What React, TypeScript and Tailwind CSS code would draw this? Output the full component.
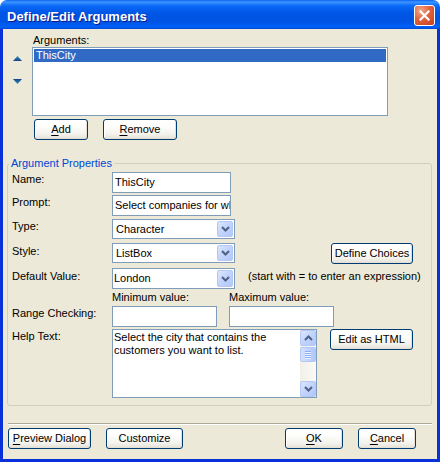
import React from "react";

type Kids = { children?: React.ReactNode; className?: string };

function Mnemonic({ children }: { children: React.ReactNode }) {
  return <span className="underline decoration-1 underline-offset-[2px]">{children}</span>;
}

function XpButton({ children, className = "" }: Kids) {
  return (
    <button
      type="button"
      className={`flex h-[21px] shrink-0 items-center justify-center rounded-[3px] border border-[#003C74] bg-[linear-gradient(180deg,#FFFFFF_0%,#FDFDFB_35%,#F3F2EC_75%,#E3E0D6_100%)] text-[11px] leading-[13px] text-black shadow-[inset_-1px_-1px_0_#E3DFD4,inset_1px_1px_0_#FFFFFF] ${className}`}
    >
      {children}
    </button>
  );
}

function MoveArrow({ up }: { up: boolean }) {
  const id = up ? "argMoveUp" : "argMoveDown";
  return (
    <svg width="9" height="5" viewBox="0 0 9 5" className="block">
      <defs>
        <linearGradient id={id} x1="0" y1="0" x2="0" y2="1">
          <stop offset="0" stopColor={up ? "#2A9CB2" : "#1B3C8E"} />
          <stop offset="1" stopColor={up ? "#1B3C8E" : "#2A9CB2"} />
        </linearGradient>
      </defs>
      <polygon points={up ? "4.5,0 9,5 0,5" : "0,0 9,0 4.5,5"} fill={`url(#${id})`} />
    </svg>
  );
}

function Chevron({ up = false }: { up?: boolean }) {
  return (
    <svg width="9" height="6" viewBox="0 0 9 6" className="block">
      <path
        d={up ? "M1 5 L4.5 1.5 L8 5" : "M1 1 L4.5 4.5 L8 1"}
        fill="none"
        stroke="#4D6185"
        strokeWidth="2"
      />
    </svg>
  );
}

function BlueKey({ up = false, className = "" }: { up?: boolean; className?: string }) {
  return (
    <div
      className={`flex w-[16px] shrink-0 items-center justify-center rounded-[2px] border border-[#B4C8F6] bg-[linear-gradient(135deg,#DCE7FE_0%,#C4D5FC_45%,#B2C7F8_100%)] ${className}`}
    >
      <Chevron up={up} />
    </div>
  );
}

function TextBox({ children, className = "" }: Kids) {
  return (
    <div
      className={`flex h-[21px] shrink-0 items-center overflow-hidden whitespace-nowrap border border-[#7F9DB9] bg-white pl-[2px] ${className}`}
    >
      {children}
    </div>
  );
}

function Combo({ value, pad = "pl-[2px]", height = "h-[20px]" }: { value: string; pad?: string; height?: string }) {
  return (
    <div className={`flex ${height} w-[123px] shrink-0 border border-[#7F9DB9] bg-white p-[1px]`}>
      <div className={`flex flex-1 items-center whitespace-nowrap ${pad}`}>{value}</div>
      <BlueKey />
    </div>
  );
}

function FieldLabel({ children }: Kids) {
  return <div className="w-[100px] shrink-0 pt-[1px]">{children}</div>;
}

function Scrollbar() {
  return (
    <div className="flex w-[16px] shrink-0 flex-col bg-[linear-gradient(90deg,#F1EFE8_0%,#FBFAF6_100%)]">
      <BlueKey up className="h-[16px]" />
      <div className="mt-[1px] flex h-[15px] w-[16px] flex-col items-center justify-center gap-[1px] rounded-[2px] border border-[#B4C8F6] bg-[linear-gradient(90deg,#D3E0FD_0%,#C0D2FB_60%,#B1C6F8_100%)]">
        {[0, 1, 2, 3].map((i) => (
          <div key={i} className="h-[1px] w-[6px] bg-[#8CB0F8] shadow-[0_1px_0_#EEF4FE]" />
        ))}
      </div>
      <div className="flex-1" />
      <BlueKey className="h-[16px]" />
    </div>
  );
}

export default function App() {
  return (
    <div className="flex h-[462px] w-[440px] flex-col text-[11px] leading-[13px] text-black [font-family:'Liberation_Sans',Arial,sans-serif]">
      {/* caption bar */}
      <div className="flex h-[29px] shrink-0 items-start rounded-t-[7px] bg-[linear-gradient(180deg,#0A61F0_0%,#3D95FF_7%,#0A6AF8_20%,#0055E5_45%,#0054E3_75%,#0060F8_92%,#0049D6_100%)]">
        <div className="ml-[7px] mt-[9px] text-[13px] font-bold leading-[16px] text-white [text-shadow:1px_1px_0_#0A1A8C]">
          Define/Edit Arguments
        </div>
        <div className="ml-auto mr-[5px] mt-[5px] flex h-[21px] w-[21px] items-center justify-center rounded-[3px] border border-white bg-[radial-gradient(circle_at_30%_25%,#F2A88C_0%,#E2643F_45%,#C43C1C_100%)]">
          <svg width="11" height="11" viewBox="0 0 11 11" className="block">
            <path d="M1.5 1.5 L9.5 9.5 M9.5 1.5 L1.5 9.5" stroke="white" strokeWidth="2.2" strokeLinecap="square" />
          </svg>
        </div>
      </div>

      {/* dialog body */}
      <div className="flex flex-1 flex-col border-x-[3px] border-b-[3px] border-[#0831D9] bg-[#ECE9D8] pt-[5px]">
        {/* argument list */}
        <div className="flex">
          <div className="flex w-[29px] shrink-0 flex-col pl-[10px] pt-[22px]">
            <MoveArrow up />
            <div className="mt-[18px]">
              <MoveArrow up={false} />
            </div>
          </div>
          <div className="flex flex-col">
            <div className="h-[13px] pl-[1px]">Arguments:</div>
            <div className="h-[69px] w-[356px] border border-[#7F9DB9] bg-white p-[1px]">
              <div className="h-[13px] bg-[#316AC5] pl-[2px] text-white">ThisCity</div>
            </div>
            <div className="mt-[3px] flex gap-[15px] pl-[2px]">
              <XpButton className="w-[54px]">
                <Mnemonic>A</Mnemonic>dd
              </XpButton>
              <XpButton className="w-[74px]">
                <Mnemonic>R</Mnemonic>emove
              </XpButton>
            </div>
          </div>
        </div>

        {/* properties group */}
        <fieldset className="ml-[4px] mt-[17px] w-[425px] min-w-0 rounded-[3px] border border-[#D0D0BF] pb-[7px] pl-[4px]">
          <legend className="-ml-[3px] px-[2px] leading-[13px] text-[#0046D5]">Argument Properties</legend>

          <div className="mt-[2px] flex items-start">
            <FieldLabel>Name:</FieldLabel>
            <TextBox className="w-[119px]">ThisCity</TextBox>
          </div>

          <div className="mt-[2px] flex items-start">
            <FieldLabel>Prompt:</FieldLabel>
            <TextBox className="w-[119px]">Select companies for which customers are listed</TextBox>
          </div>

          <div className="mt-[3px] flex items-start">
            <FieldLabel>Type:</FieldLabel>
            <Combo value="Character" />
          </div>

          <div className="mt-[4px] flex items-start">
            <div className="w-[100px] shrink-0 pt-[2px]">Style:</div>
            <Combo value="ListBox" />
            <XpButton className="ml-[96px] w-[82px]">Define Choices</XpButton>
          </div>

          <div className="mt-[4px] flex items-start">
            <div className="w-[100px] shrink-0 pt-[2px]">Default Value:</div>
            <Combo value="London" pad="pl-0" height="h-[21px]" />
            <div className="ml-[13px] whitespace-nowrap pt-[2px]">(start with = to enter an expression)</div>
          </div>

          <div className="mt-[2px] flex">
            <div className="w-[100px] shrink-0" />
            <div className="w-[117px] shrink-0">Minimum value:</div>
            <div>Maximum value:</div>
          </div>

          <div className="mt-[2px] flex items-start">
            <FieldLabel>Range Checking:</FieldLabel>
            <TextBox className="w-[105px]" />
            <TextBox className="ml-[12px] w-[105px]" />
          </div>

          <div className="mt-[2px] flex items-start">
            <FieldLabel>Help Text:</FieldLabel>
            <div className="flex h-[69px] w-[205px] shrink-0 border border-[#7F9DB9] bg-white">
              <div className="flex-1 pl-[1px] pt-[1px]">
                Select the city that contains the customers you want to list.
              </div>
              <Scrollbar />
            </div>
            <XpButton className="ml-[13px] w-[83px]">Edit as HTML</XpButton>
          </div>
        </fieldset>

        {/* footer */}
        <div className="ml-[5px] mt-[17px] h-[2px] w-[424px] border-b border-t border-b-white border-t-[#ACA899]" />
        <div className="mt-[3px] flex pl-[5px]">
          <XpButton className="w-[83px]">
            <Mnemonic>P</Mnemonic>review Dialog
          </XpButton>
          <XpButton className="ml-[15px] w-[77px]">Customize</XpButton>
          <XpButton className="ml-[102px] w-[58px]">
            <Mnemonic>O</Mnemonic>K
          </XpButton>
          <XpButton className="ml-[15px] w-[58px]">
            <Mnemonic>C</Mnemonic>ancel
          </XpButton>
        </div>
      </div>
    </div>
  );
}
